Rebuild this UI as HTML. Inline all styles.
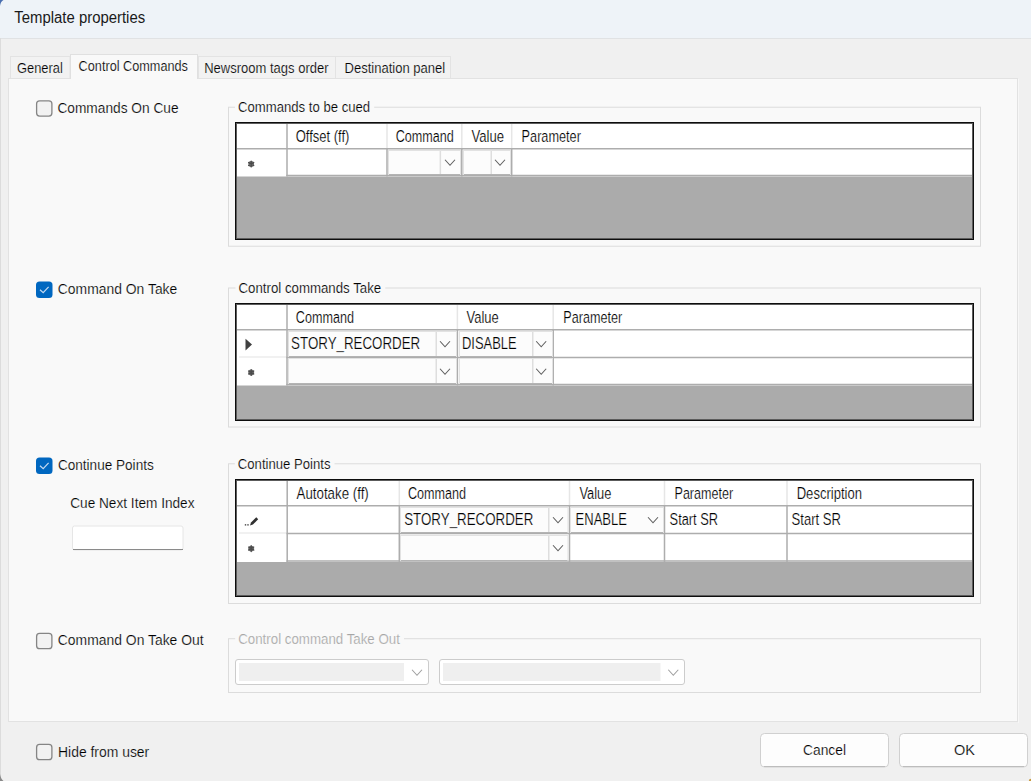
<!DOCTYPE html><html><head><meta charset="utf-8"><style>html,body{margin:0;padding:0;background:#f0f0f0;width:1031px;height:781px;overflow:hidden}svg{display:block}text{font-family:"Liberation Sans",sans-serif}</style></head><body>
<svg width="1031" height="781" viewBox="0 0 1031 781">
<rect x="0" y="0" width="1031" height="781" fill="#f0f0f0" stroke="none" stroke-width="1" rx="0" />
<rect x="0" y="0" width="1031" height="38" fill="#eef3f8" stroke="none" stroke-width="1" rx="0" />
<rect x="0" y="38" width="1031" height="1" fill="#e0e2e4"/>
<rect x="0" y="38" width="1" height="743" fill="#dcdcdc"/>
<path d="M0,6 Q0.5,1.5 3.5,0 L0,0 Z" fill="#4a6fb0"/>
<path d="M0,774 Q0.8,779 3.5,781 L0,781 Z" fill="#8a8a8a"/>
<circle cx="1031" cy="781" r="2.2" fill="#c89a40"/>
<text transform="translate(14.30,22.80) scale(0.9317,1)" font-size="16" fill="#1a1a1a" stroke="#eef3f8" stroke-width="0.0" paint-order="fill">Template properties</text>
<rect x="10.5" y="56.5" width="59.5" height="23" fill="#f2f2f2" stroke="#e3e3e3" stroke-width="1" rx="0" />
<rect x="198.5" y="56.5" width="137" height="23" fill="#f2f2f2" stroke="#e3e3e3" stroke-width="1" rx="0" />
<rect x="335.5" y="56.5" width="115" height="23" fill="#f2f2f2" stroke="#e3e3e3" stroke-width="1" rx="0" />
<rect x="8.5" y="78.5" width="1009" height="643" fill="#f9f9f9" stroke="#e2e2e2" stroke-width="1" rx="0" />
<rect x="1018" y="79" width="1" height="644" fill="#f7f7f7"/>
<rect x="70.5" y="54.5" width="127" height="30" fill="#f9f9f9" stroke="#e0e0e0" stroke-width="1" rx="0" />
<rect x="70" y="79" width="129" height="6" fill="#f9f9f9" stroke="none" stroke-width="1" rx="0" />
<text transform="translate(17.00,72.60) scale(0.8312,1)" font-size="15.5" fill="#000" stroke="#f2f2f2" stroke-width="0.2" paint-order="fill">General</text>
<text transform="translate(78.60,70.60) scale(0.8195,1)" font-size="15.5" fill="#000" stroke="#f9f9f9" stroke-width="0.2" paint-order="fill">Control Commands</text>
<text transform="translate(204.20,72.60) scale(0.8408,1)" font-size="15.5" fill="#000" stroke="#f2f2f2" stroke-width="0.2" paint-order="fill">Newsroom tags order</text>
<text transform="translate(344.50,72.60) scale(0.8422,1)" font-size="15.5" fill="#000" stroke="#f2f2f2" stroke-width="0.2" paint-order="fill">Destination panel</text>
<rect x="36.6" y="100.8" width="15.3" height="15.3" fill="#f2f2f2" stroke="#858585" stroke-width="1.3" rx="3" />
<text transform="translate(57.40,112.70) scale(0.8854,1)" font-size="15.5" fill="#000" stroke="#f9f9f9" stroke-width="0.2" paint-order="fill">Commands On Cue</text>
<rect x="36" y="281.5" width="16.5" height="16.5" fill="#0067c0" stroke="none" stroke-width="1" rx="3.5" />
<path d="M40,289.8 L43.2,292.7 L48.6,286.9" fill="none" stroke="#c5daf0" stroke-width="1.2"/>
<text transform="translate(57.80,293.80) scale(0.8971,1)" font-size="15.5" fill="#000" stroke="#f9f9f9" stroke-width="0.2" paint-order="fill">Command On Take</text>
<rect x="36" y="457.5" width="16.5" height="16.5" fill="#0067c0" stroke="none" stroke-width="1" rx="3.5" />
<path d="M40,465.8 L43.2,468.7 L48.6,462.9" fill="none" stroke="#c5daf0" stroke-width="1.2"/>
<text transform="translate(57.90,470.30) scale(0.8766,1)" font-size="15.5" fill="#000" stroke="#f9f9f9" stroke-width="0.2" paint-order="fill">Continue Points</text>
<text transform="translate(70.20,507.70) scale(0.8804,1)" font-size="15.5" fill="#000" stroke="#f9f9f9" stroke-width="0.2" paint-order="fill">Cue Next Item Index</text>
<rect x="72.5" y="526" width="110.5" height="24" fill="#ffffff" stroke="#e6e6e6" stroke-width="1" rx="2" />
<rect x="73" y="549" width="110" height="1" fill="#8a8a8a"/>
<rect x="36.6" y="633.4" width="15.3" height="15.3" fill="#f2f2f2" stroke="#858585" stroke-width="1.3" rx="3" />
<text transform="translate(57.80,645.00) scale(0.8978,1)" font-size="15.5" fill="#000" stroke="#f9f9f9" stroke-width="0.2" paint-order="fill">Command On Take Out</text>
<rect x="228.5" y="107.2" width="752" height="139.0" fill="none" stroke="#dcdcdc" stroke-width="1" rx="0" />
<rect x="235" y="102.7" width="139.2" height="9" fill="#f9f9f9" stroke="none" stroke-width="1" rx="0" />
<text transform="translate(238.00,111.60) scale(0.8480,1)" font-size="15.5" fill="#000" stroke="#f9f9f9" stroke-width="0.2" paint-order="fill">Commands to be cued</text>
<rect x="235" y="122" width="739" height="118" fill="#ababab" stroke="none" stroke-width="1" rx="0" />
<rect x="237" y="124" width="735" height="52.5" fill="#ffffff" stroke="none" stroke-width="1" rx="0" />
<rect x="237" y="148" width="735" height="1.5" fill="#adadad"/>
<rect x="286.25" y="174.75" width="685.75" height="1.5" fill="#adadad"/>
<rect x="386.25" y="124" width="1.5" height="24" fill="#e6e6e6"/>
<rect x="461.05" y="124" width="1.5" height="24" fill="#e6e6e6"/>
<rect x="510.95" y="124" width="1.5" height="24" fill="#e6e6e6"/>
<rect x="286.25" y="124" width="1.5" height="52.5" fill="#adadad"/>
<rect x="386.25" y="148" width="1.5" height="28.5" fill="#adadad"/>
<rect x="461.05" y="148" width="1.5" height="28.5" fill="#adadad"/>
<rect x="510.95" y="148" width="1.5" height="28.5" fill="#adadad"/>
<rect x="236.5" y="123.5" width="736" height="115" fill="none" stroke="#5c5c5c" stroke-width="1" rx="0" />
<rect x="235.5" y="122.5" width="738" height="117" fill="none" stroke="#0d0d0d" stroke-width="1" rx="0" />
<text transform="translate(295.70,141.60) scale(0.8239,1)" font-size="15.8" fill="#000" stroke="#ffffff" stroke-width="0.2" paint-order="fill">Offset (ff)</text>
<text transform="translate(395.70,141.60) scale(0.7984,1)" font-size="15.8" fill="#000" stroke="#ffffff" stroke-width="0.2" paint-order="fill">Command</text>
<text transform="translate(471.40,141.60) scale(0.8316,1)" font-size="15.8" fill="#000" stroke="#ffffff" stroke-width="0.2" paint-order="fill">Value</text>
<text transform="translate(521.60,141.60) scale(0.8049,1)" font-size="15.8" fill="#000" stroke="#ffffff" stroke-width="0.2" paint-order="fill">Parameter</text>
<circle cx="251.2" cy="164" r="2.9" fill="#6a6a6a"/>
<g stroke="#4a4a4a" stroke-width="1.2" stroke-linecap="round"><path d="M251.2,161 L251.2,167 M248.6,162.5 L253.79999999999998,165.5 M248.6,165.5 L253.79999999999998,162.5"/></g>
<rect x="388.5" y="150.5" width="72" height="24" fill="#fcfcfc" stroke="#e2e2e2" stroke-width="1" rx="0" />
<rect x="389" y="174" width="71" height="1" fill="#b4b4b4"/>
<rect x="439.6" y="151" width="1.5" height="23" fill="#dedede"/>
<path d="M445.00,159.75 L450.00,165.25 L455.00,159.75" fill="none" stroke="#606060" stroke-width="1.1" />
<rect x="463.5" y="150.5" width="47" height="24" fill="#fcfcfc" stroke="#e2e2e2" stroke-width="1" rx="0" />
<rect x="464" y="174" width="46" height="1" fill="#b4b4b4"/>
<rect x="490.5" y="151" width="1.5" height="23" fill="#dedede"/>
<path d="M495.00,159.75 L500.00,165.25 L505.00,159.75" fill="none" stroke="#606060" stroke-width="1.1" />
<rect x="228.5" y="288.0" width="752" height="139.0" fill="none" stroke="#dcdcdc" stroke-width="1" rx="0" />
<rect x="235.5" y="283.5" width="149.8" height="9" fill="#f9f9f9" stroke="none" stroke-width="1" rx="0" />
<text transform="translate(238.50,292.70) scale(0.8561,1)" font-size="15.5" fill="#000" stroke="#f9f9f9" stroke-width="0.2" paint-order="fill">Control commands Take</text>
<rect x="235" y="303" width="739" height="118" fill="#ababab" stroke="none" stroke-width="1" rx="0" />
<rect x="237" y="305" width="735" height="80.5" fill="#ffffff" stroke="none" stroke-width="1" rx="0" />
<rect x="237" y="329" width="735" height="1.5" fill="#adadad"/>
<rect x="286.25" y="356.75" width="685.75" height="1.5" fill="#adadad"/>
<rect x="239" y="356.5" width="47.25" height="1" fill="#e3e3e3"/>
<rect x="286.25" y="383.75" width="685.75" height="1.5" fill="#adadad"/>
<rect x="456.65" y="305" width="1.5" height="24" fill="#e6e6e6"/>
<rect x="552.45" y="305" width="1.5" height="24" fill="#e6e6e6"/>
<rect x="286.25" y="305" width="1.5" height="80.5" fill="#adadad"/>
<rect x="456.65" y="329" width="1.5" height="56.5" fill="#adadad"/>
<rect x="552.45" y="329" width="1.5" height="56.5" fill="#adadad"/>
<rect x="236.5" y="304.5" width="736" height="115" fill="none" stroke="#5c5c5c" stroke-width="1" rx="0" />
<rect x="235.5" y="303.5" width="738" height="117" fill="none" stroke="#0d0d0d" stroke-width="1" rx="0" />
<text transform="translate(295.80,322.70) scale(0.7984,1)" font-size="15.8" fill="#000" stroke="#ffffff" stroke-width="0.2" paint-order="fill">Command</text>
<text transform="translate(466.60,322.70) scale(0.8214,1)" font-size="15.8" fill="#000" stroke="#ffffff" stroke-width="0.2" paint-order="fill">Value</text>
<text transform="translate(563.30,322.70) scale(0.7995,1)" font-size="15.8" fill="#000" stroke="#ffffff" stroke-width="0.2" paint-order="fill">Parameter</text>
<path d="M245.5,338.8 L252,344.6 L245.5,350.4 Z" fill="#404040"/>
<circle cx="251.2" cy="372.5" r="2.9" fill="#6a6a6a"/>
<g stroke="#4a4a4a" stroke-width="1.2" stroke-linecap="round"><path d="M251.2,369.5 L251.2,375.5 M248.6,371.0 L253.79999999999998,374.0 M248.6,374.0 L253.79999999999998,371.0"/></g>
<rect x="288.5" y="331.5" width="168" height="25" fill="#fcfcfc" stroke="#e2e2e2" stroke-width="1" rx="0" />
<rect x="289" y="356" width="167" height="1" fill="#b4b4b4"/>
<rect x="435.5" y="332" width="1.5" height="24" fill="#dedede"/>
<path d="M440.00,341.25 L445.00,346.75 L450.00,341.25" fill="none" stroke="#606060" stroke-width="1.1" />
<text transform="translate(291.10,348.70) scale(0.8335,1)" font-size="16" fill="#000" stroke="#ffffff" stroke-width="0.2" paint-order="fill">STORY_RECORDER</text>
<rect x="459.5" y="331.5" width="93" height="25" fill="#fcfcfc" stroke="#e2e2e2" stroke-width="1" rx="0" />
<rect x="460" y="356" width="92" height="1" fill="#b4b4b4"/>
<rect x="532" y="332" width="1.5" height="24" fill="#dedede"/>
<path d="M536.20,341.25 L541.20,346.75 L546.20,341.25" fill="none" stroke="#606060" stroke-width="1.1" />
<text transform="translate(462.00,348.70) scale(0.8092,1)" font-size="16" fill="#000" stroke="#ffffff" stroke-width="0.2" paint-order="fill">DISABLE</text>
<rect x="288.5" y="358.5" width="168" height="25" fill="#fcfcfc" stroke="#e2e2e2" stroke-width="1" rx="0" />
<rect x="289" y="383" width="167" height="1" fill="#b4b4b4"/>
<rect x="435.5" y="359" width="1.5" height="24" fill="#dedede"/>
<path d="M440.00,368.75 L445.00,374.25 L450.00,368.75" fill="none" stroke="#606060" stroke-width="1.1" />
<rect x="459.5" y="358.5" width="93" height="25" fill="#fcfcfc" stroke="#e2e2e2" stroke-width="1" rx="0" />
<rect x="460" y="383" width="92" height="1" fill="#b4b4b4"/>
<rect x="532" y="359" width="1.5" height="24" fill="#dedede"/>
<path d="M536.20,368.75 L541.20,374.25 L546.20,368.75" fill="none" stroke="#606060" stroke-width="1.1" />
<rect x="228.5" y="463.8" width="752" height="139.7" fill="none" stroke="#dcdcdc" stroke-width="1" rx="0" />
<rect x="234.8" y="459.3" width="99.69999999999999" height="9" fill="#f9f9f9" stroke="none" stroke-width="1" rx="0" />
<text transform="translate(237.80,469.00) scale(0.8473,1)" font-size="15.5" fill="#000" stroke="#f9f9f9" stroke-width="0.2" paint-order="fill">Continue Points</text>
<rect x="235" y="479" width="739" height="118" fill="#ababab" stroke="none" stroke-width="1" rx="0" />
<rect x="237" y="481" width="735" height="81" fill="#ffffff" stroke="none" stroke-width="1" rx="0" />
<rect x="237" y="505" width="735" height="1.5" fill="#adadad"/>
<rect x="286.45" y="532.75" width="685.55" height="1.5" fill="#adadad"/>
<rect x="239" y="532.5" width="47.44999999999999" height="1" fill="#e3e3e3"/>
<rect x="286.45" y="560.25" width="685.55" height="1.5" fill="#adadad"/>
<rect x="398.55" y="481" width="1.5" height="24" fill="#e6e6e6"/>
<rect x="568.75" y="481" width="1.5" height="24" fill="#e6e6e6"/>
<rect x="663.75" y="481" width="1.5" height="24" fill="#e6e6e6"/>
<rect x="786.25" y="481" width="1.5" height="24" fill="#e6e6e6"/>
<rect x="286.45" y="481" width="1.5" height="81" fill="#adadad"/>
<rect x="398.55" y="505" width="1.5" height="57" fill="#adadad"/>
<rect x="568.75" y="505" width="1.5" height="57" fill="#adadad"/>
<rect x="663.75" y="505" width="1.5" height="57" fill="#adadad"/>
<rect x="786.25" y="505" width="1.5" height="57" fill="#adadad"/>
<rect x="236.5" y="480.5" width="736" height="115" fill="none" stroke="#5c5c5c" stroke-width="1" rx="0" />
<rect x="235.5" y="479.5" width="738" height="117" fill="none" stroke="#0d0d0d" stroke-width="1" rx="0" />
<text transform="translate(296.50,498.90) scale(0.8427,1)" font-size="15.8" fill="#000" stroke="#ffffff" stroke-width="0.2" paint-order="fill">Autotake (ff)</text>
<text transform="translate(408.00,498.90) scale(0.7984,1)" font-size="15.8" fill="#000" stroke="#ffffff" stroke-width="0.2" paint-order="fill">Command</text>
<text transform="translate(579.40,498.90) scale(0.8163,1)" font-size="15.8" fill="#000" stroke="#ffffff" stroke-width="0.2" paint-order="fill">Value</text>
<text transform="translate(674.50,498.90) scale(0.7954,1)" font-size="15.8" fill="#000" stroke="#ffffff" stroke-width="0.2" paint-order="fill">Parameter</text>
<text transform="translate(796.70,498.90) scale(0.8266,1)" font-size="15.8" fill="#000" stroke="#ffffff" stroke-width="0.2" paint-order="fill">Description</text>
<path d="M244.8,524.8 h1.4 M247.3,524.8 h1.4" stroke="#303030" stroke-width="1.2"/>
<path d="M250,525.5 L251,522.6 L256.3,517.3 L258.2,519.2 L252.9,524.5 Z" fill="#303030"/>
<circle cx="251.2" cy="548.6" r="2.9" fill="#6a6a6a"/>
<g stroke="#4a4a4a" stroke-width="1.2" stroke-linecap="round"><path d="M251.2,545.6 L251.2,551.6 M248.6,547.1 L253.79999999999998,550.1 M248.6,550.1 L253.79999999999998,547.1"/></g>
<rect x="400.5" y="507.5" width="167.5" height="25" fill="#fcfcfc" stroke="#e2e2e2" stroke-width="1" rx="0" />
<rect x="401" y="532" width="166.5" height="1" fill="#b4b4b4"/>
<rect x="548" y="508" width="1.5" height="24" fill="#dedede"/>
<path d="M553.00,517.25 L558.00,522.75 L563.00,517.25" fill="none" stroke="#606060" stroke-width="1.1" />
<text transform="translate(404.20,525.10) scale(0.8335,1)" font-size="16" fill="#000" stroke="#ffffff" stroke-width="0.2" paint-order="fill">STORY_RECORDER</text>
<rect x="570.5" y="507.5" width="93" height="25" fill="#fcfcfc" stroke="#e2e2e2" stroke-width="1" rx="0" />
<rect x="571" y="532" width="92" height="1" fill="#b4b4b4"/>
<path d="M648.00,517.25 L653.00,522.75 L658.00,517.25" fill="none" stroke="#606060" stroke-width="1.1" />
<text transform="translate(575.50,525.10) scale(0.8162,1)" font-size="16" fill="#000" stroke="#ffffff" stroke-width="0.2" paint-order="fill">ENABLE</text>
<text transform="translate(669.60,525.10) scale(0.8017,1)" font-size="16" fill="#000" stroke="#ffffff" stroke-width="0.2" paint-order="fill">Start SR</text>
<text transform="translate(791.60,525.10) scale(0.8182,1)" font-size="16" fill="#000" stroke="#ffffff" stroke-width="0.2" paint-order="fill">Start SR</text>
<rect x="400.5" y="535.5" width="167.5" height="25" fill="#fcfcfc" stroke="#e2e2e2" stroke-width="1" rx="0" />
<rect x="401" y="560" width="166.5" height="1" fill="#b4b4b4"/>
<rect x="548" y="536" width="1.5" height="24" fill="#dedede"/>
<path d="M553.00,545.25 L558.00,550.75 L563.00,545.25" fill="none" stroke="#606060" stroke-width="1.1" />
<rect x="228.5" y="638.7" width="752" height="53.799999999999955" fill="none" stroke="#dcdcdc" stroke-width="1" rx="0" />
<rect x="235.2" y="634.2" width="168.8" height="9" fill="#f9f9f9" stroke="none" stroke-width="1" rx="0" />
<text transform="translate(238.20,643.50) scale(0.8588,1)" font-size="15.5" fill="#a6a6a6" stroke="#f9f9f9" stroke-width="0.2" paint-order="fill">Control command Take Out</text>
<rect x="235.5" y="659.5" width="193" height="25" fill="#ffffff" stroke="#cccccc" stroke-width="1" rx="2.5" />
<rect x="239" y="663" width="165" height="18" fill="#efefef" stroke="none" stroke-width="1" rx="0" />
<path d="M412.00,669.75 L417.00,675.25 L422.00,669.75" fill="none" stroke="#a0a0a0" stroke-width="1.1" />
<rect x="439.5" y="659.5" width="245" height="25" fill="#ffffff" stroke="#cccccc" stroke-width="1" rx="2.5" />
<rect x="443" y="663" width="217.5" height="18" fill="#efefef" stroke="none" stroke-width="1" rx="0" />
<path d="M668.30,669.75 L673.30,675.25 L678.30,669.75" fill="none" stroke="#a0a0a0" stroke-width="1.1" />
<rect x="36.6" y="744.4" width="15.3" height="15.3" fill="#f2f2f2" stroke="#858585" stroke-width="1.3" rx="3" />
<text transform="translate(58.00,756.50) scale(0.8986,1)" font-size="15.5" fill="#000" stroke="#f0f0f0" stroke-width="0.2" paint-order="fill">Hide from user</text>
<rect x="760.5" y="733.5" width="128" height="33.5" fill="#fdfdfd" stroke="#d0d0d0" stroke-width="1" rx="4" />
<rect x="764" y="766" width="121" height="1" fill="#bdbdbd"/>
<text transform="translate(803.00,755.40) scale(0.8921,1)" font-size="15.5" fill="#000" stroke="#fdfdfd" stroke-width="0.2" paint-order="fill">Cancel</text>
<rect x="899.5" y="733.5" width="128" height="33.5" fill="#fdfdfd" stroke="#d0d0d0" stroke-width="1" rx="4" />
<rect x="903" y="766" width="121" height="1" fill="#bdbdbd"/>
<text transform="translate(953.90,755.40) scale(0.9375,1)" font-size="15.5" fill="#000" stroke="#fdfdfd" stroke-width="0.2" paint-order="fill">OK</text>
</svg></body></html>
